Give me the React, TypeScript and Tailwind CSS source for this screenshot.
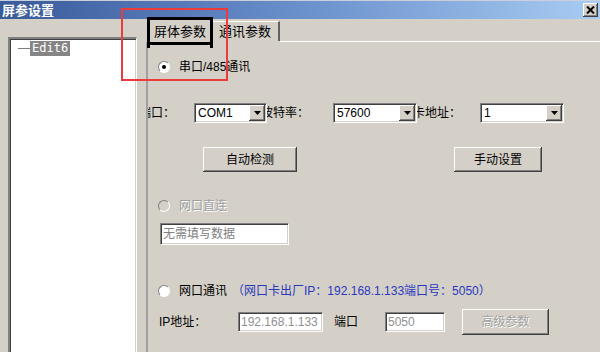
import React from 'react';

const sunken =
  'bg-white border border-t-[#808080] border-l-[#808080] border-b-white border-r-white shadow-[inset_1px_1px_0_#404040,inset_-1px_-1px_0_#d4d0c8]';
const raised =
  'bg-[#d4d0c8] shadow-[inset_-1px_-1px_0_#404040,inset_1px_1px_0_#ffffff,inset_-2px_-2px_0_#808080]';

const Radio: React.FC<{ checked?: boolean; disabled?: boolean }> = ({ checked, disabled }) => (
  <div
    className={`w-3 h-3 rounded-full border border-t-[#808080] border-l-[#808080] border-b-white border-r-white flex items-center justify-center ${
      disabled ? 'bg-[#d4d0c8]' : 'bg-white'
    }`}
  >
    {checked && <div className="w-1 h-1 rounded-full bg-black" />}
  </div>
);

const Select: React.FC<{ value: string; className: string }> = ({ value, className }) => (
  <div className={`relative z-10 h-5 flex items-center ${sunken} ${className}`}>
    <span className="pl-[3px] text-[12px] leading-none flex-1">{value}</span>
    <div className={`w-4 h-4 mr-px flex items-center justify-center ${raised}`}>
      <svg width="7" height="4" viewBox="0 0 7 4">
        <path d="M0 0 H7 L3.5 4 Z" fill="#000" />
      </svg>
    </div>
  </div>
);

const Button: React.FC<{ label: string; className: string; disabled?: boolean }> = ({ label, className, disabled }) => (
  <div
    className={`flex items-center justify-center text-[12px] ${raised} ${className} ${
      disabled ? 'text-[#a0a0a0] [text-shadow:1px_1px_0_#ffffff]' : 'text-black'
    }`}
  >
    {label}
  </div>
);

export default function App() {
  return (
    <div className="relative w-[600px] h-[352px] overflow-hidden bg-[#d4d0c8] text-black text-[12px] font-[family-name:Liberation_Sans,Noto_Sans_CJK_SC,sans-serif]">
      {/* title bar */}
      <div className="h-[19px] flex items-center justify-between bg-gradient-to-r from-[#3a5a9a] via-[#6a90cc] to-[#a8ccf2] border-t border-[#c8d0dc]">
        <span className="pl-[2px] text-white font-bold text-[13px] leading-none">屏参设置</span>
        <div className={`w-[15px] h-[14px] mr-[2px] flex items-center justify-center ${raised}`}>
          <svg width="9" height="8" viewBox="0 0 9 8">
            <path d="M1 0.5 L8 7.5 M8 0.5 L1 7.5" stroke="#000" strokeWidth="2" />
          </svg>
        </div>
      </div>

      <div className="flex h-[333px]">
        {/* tree */}
        <div className="w-[146px] pl-2 pt-[18px] pr-[9px]">
          <div className={`h-[340px] pt-[2px] ${sunken} border-l-2 border-t-2`}>
            <div className="flex items-center h-[15px] pl-[8px]">
              <div className="w-[12px] h-px bg-[#808080]" />
              <span className="bg-[#858585] text-white px-[2px] text-[12px] leading-[15px] font-[family-name:DejaVu_Sans_Mono,monospace]">
                Edit6
              </span>
            </div>
          </div>
        </div>

        {/* tab control */}
        <div className="flex-1 flex flex-col">
          <div className="h-[23px] flex items-end pl-[1px]">
            <div className="w-[65px] h-[23px] flex items-center justify-center text-[13px] bg-[#d4d0c8] border-t border-l border-white pt-[2px]">
              屏体参数
            </div>
            <div className="w-[68px] h-[20px] flex items-center justify-center text-[13px] border-t border-white border-r-2 border-r-[#606060] mb-px">
              通讯参数
            </div>
            <div className="flex-1 h-px bg-white" />
          </div>
          <div className="flex-1 border-l-2 border-l-[#a0a0a0] overflow-hidden flex flex-col">
            {/* 串口 radio */}
            <div className="mt-[18px] h-[14px] flex items-center pl-[10px] gap-[9px]">
              <Radio checked />
              <span>串口/485通讯</span>
            </div>

            {/* selects */}
            <div className="mt-[29px] h-5 flex items-center">
              <span className="w-[55px] -ml-[9px] shrink-0">端口：</span>
              <Select value="COM1" className="w-[73px]" />
              <span className="w-[72px] -ml-[6px] shrink-0">波特率：</span>
              <Select value="57600" className="w-[84px]" />
              <span className="w-[67px] -ml-[4px] shrink-0">卡地址：</span>
              <Select value="1" className="w-[84px]" />
            </div>

            {/* buttons */}
            <div className="mt-[24px] h-[25px] flex">
              <Button label="自动检测" className="ml-[55px] w-[94px]" />
              <Button label="手动设置" className="ml-[157px] w-[88px]" />
            </div>

            {/* 网口直连 */}
            <div className="mt-[27px] h-[14px] flex items-center pl-[10px] gap-[9px]">
              <Radio disabled />
              <span className="text-[#a0a0a0] [text-shadow:1px_1px_0_#ffffff]">网口直连</span>
            </div>
            <div className={`mt-[10px] ml-[12px] w-[129px] h-[22px] flex items-center pl-[2px] text-[#808080] ${sunken}`}>
              无需填写数据
            </div>

            {/* 网口通讯 */}
            <div className="mt-[39px] h-[14px] flex items-center pl-[10px]">
              <Radio />
              <span className="ml-[9px]">网口通讯</span>
              <span className="ml-[5px] text-[#2a38c0]">（网口卡出厂IP：192.168.1.133端口号：5050）</span>
            </div>

            {/* IP row */}
            <div className="mt-[11px] h-[26px] flex items-center">
              <span className="ml-[11px] w-[79px] shrink-0">IP地址：</span>
              <div className={`w-[85px] h-5 flex items-center pl-[2px] text-[#909090] ${sunken}`}>192.168.1.133</div>
              <span className="ml-[11px] w-[51px] shrink-0">端口</span>
              <div className={`w-[60px] h-5 flex items-center pl-[2px] text-[#909090] ${sunken}`}>5050</div>
              <Button label="高级参数" disabled className="ml-[17px] w-[87px] h-[26px]" />
            </div>
          </div>
        </div>
      </div>

      {/* annotation: red box */}
      <div className="absolute left-[121px] top-[8px] w-[107px] h-[73px] border-2 border-[#ee3a3a]" />
      {/* annotation: black tab outline */}
      <div className="absolute left-[147px] top-[17px] w-[66px] h-[31px] border-x-[3px] border-t-[3px] border-black">
        <div className="absolute left-0 right-0 top-[22px] h-[3px] bg-black" />
      </div>
    </div>
  );
}
